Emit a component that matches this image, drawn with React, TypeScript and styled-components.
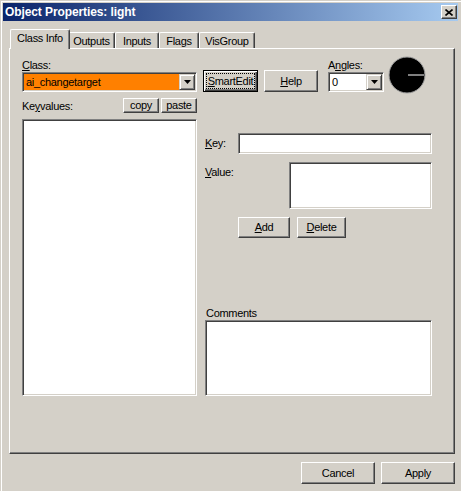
import styled, { createGlobalStyle } from "styled-components";

const GlobalStyle = createGlobalStyle`
    html, body {
        margin: 0;
        padding: 0;
        background: #d4d0c8;
    }
    body {
        font-family: "Liberation Sans", Tahoma, Arial, sans-serif;
        font-size: 11px;
        letter-spacing: -0.3px;
        color: #000;
    }
    * {
        box-sizing: border-box;
    }
`;

const Window = styled.div`
    width: 461px;
    height: 491px;
    background: #d4d0c8;
    border-top: 1px solid #d4d0c8;
    border-left: 1px solid #d4d0c8;
    box-shadow: inset 1px 1px 0 #fff;
    padding: 2px 3px 0 2px;
    display: flex;
    flex-direction: column;
    overflow: hidden;
`;

const TitleBar = styled.div`
    height: 18px;
    display: flex;
    align-items: center;
    justify-content: space-between;
    padding: 0 1px 0 2px;
    background: linear-gradient(to right, #0a246a, #a6caf0);
`;

const Title = styled.span`
    color: #fff;
    font-weight: bold;
    font-size: 12px;
    letter-spacing: -0.1px;
    line-height: 18px;
`;

const CloseBtn = styled.div`
    width: 16px;
    height: 14px;
    background: #d4d0c8;
    border: 1px solid;
    border-color: #fff #404040 #404040 #fff;
    box-shadow: inset -1px -1px 0 #808080;
    display: flex;
    align-items: center;
    justify-content: center;
`;

const Body = styled.div`
    flex: 1;
    display: flex;
    flex-direction: column;
    padding: 8px 3px 0 6px;
`;

const TabStrip = styled.div`
    height: 19px;
    display: flex;
    align-items: flex-end;
    padding-left: 3px;
`;

const Tab = styled.div<{ $w: number; $active?: boolean }>`
    width: ${(p) => p.$w + (p.$active ? 4 : 0)}px;
    height: ${(p) => (p.$active ? 20 : 16)}px;
    margin: ${(p) => (p.$active ? "0 -2px -1px" : "0")};
    position: relative;
    z-index: ${(p) => (p.$active ? 1 : 0)};
    background: #d4d0c8;
    border-top: 1px solid #fff;
    border-left: 1px solid #fff;
    border-right: 1px solid #404040;
    box-shadow: inset -1px 0 0 #808080;
    border-radius: 2px 2px 0 0;
    text-align: center;
    padding-top: 2px;
    line-height: 13px;
`;

const Panel = styled.div`
    height: 406px;
    background: #d4d0c8;
    border: 1px solid;
    border-color: #fff #404040 #404040 #fff;
    box-shadow: inset -1px -1px 0 #808080;
    padding: 9px 0 0 12px;
    display: flex;
    flex-direction: column;
`;

const TopRow = styled.div`
    display: flex;
    align-items: flex-end;
    height: 34px;
`;

const Group = styled.div<{ $ml?: number }>`
    display: flex;
    flex-direction: column;
    margin-left: ${(p) => p.$ml ?? 0}px;
`;

const Label = styled.span<{ $pl?: number }>`
    line-height: 14px;
    height: 14px;
    padding-left: ${(p) => p.$pl ?? 0}px;
    white-space: nowrap;
`;

const Field = styled.div<{ $w?: number; $h: number; $bg?: string; $grow?: boolean; $mt?: number }>`
    width: ${(p) => (p.$w ? `${p.$w}px` : "auto")};
    flex: ${(p) => (p.$grow ? "1" : "none")};
    height: ${(p) => p.$h}px;
    margin-top: ${(p) => p.$mt ?? 0}px;
    background: ${(p) => p.$bg ?? "#fff"};
    border: 1px solid;
    border-color: #808080 #fff #fff #808080;
    box-shadow: inset 1px 1px 0 #404040, inset -1px -1px 0 #d4d0c8;
`;

const Combo = styled(Field)`
    display: flex;
    align-items: center;
    padding: 1px;
`;

const ComboText = styled.span`
    flex: 1;
    padding-left: 2px;
    line-height: 16px;
`;

const DropBtn = styled.div`
    width: 16px;
    height: 16px;
    background: #d4d0c8;
    border: 1px solid;
    border-color: #d4d0c8 #404040 #404040 #d4d0c8;
    box-shadow: inset 1px 1px 0 #fff, inset -1px -1px 0 #808080;
    display: flex;
    align-items: center;
    justify-content: center;
`;

const Button = styled.button<{ $w: number; $h: number; $ml?: number; $focus?: boolean }>`
    width: ${(p) => p.$w}px;
    height: ${(p) => p.$h}px;
    margin-left: ${(p) => p.$ml ?? 0}px;
    padding: 0;
    font-family: inherit;
    font-size: 11px;
    letter-spacing: -0.3px;
    white-space: nowrap;
    color: #000;
    background: #d4d0c8;
    border: 1px solid;
    border-color: ${(p) => (p.$focus ? "#000" : "#fff #404040 #404040 #fff")};
    box-shadow: ${(p) =>
        p.$focus
            ? "inset 1px 1px 0 #fff, inset -1px -1px 0 #404040, inset -2px -2px 0 #808080"
            : "inset -1px -1px 0 #808080"};
    outline: ${(p) => (p.$focus ? "1px dotted #000" : "none")};
    outline-offset: -4px;
    line-height: 1;
    flex: none;
`;

const Dial = styled.svg`
    margin: -6px 0 -2px 4px;
    flex: none;
`;

const Columns = styled.div`
    display: flex;
    margin-top: 6px;
`;

const LeftCol = styled.div`
    width: 175px;
    display: flex;
    flex-direction: column;
`;

const ListHeader = styled.div`
    height: 15px;
    display: flex;
    align-items: flex-end;
    gap: 2px;
    span {
        margin-right: auto;
        line-height: 13px;
    }
`;

const RightCol = styled.div`
    width: 227px;
    margin-left: 8px;
    display: flex;
    flex-direction: column;
`;

const FieldRow = styled.div<{ $mt: number; $center?: boolean }>`
    display: flex;
    align-items: ${(p) => (p.$center ? "center" : "flex-start")};
    margin-top: ${(p) => p.$mt}px;
`;

const RowLabel = styled.span<{ $w: number; $pt?: number }>`
    width: ${(p) => p.$w}px;
    padding-top: ${(p) => p.$pt ?? 0}px;
    line-height: 13px;
    flex: none;
`;

const ButtonRow = styled.div`
    display: flex;
    margin-top: 8px;
    padding-left: 33px;
`;

const CommentsGroup = styled.div`
    margin-top: auto;
    display: flex;
    flex-direction: column;
`;

const Footer = styled.div`
    display: flex;
    justify-content: flex-end;
    gap: 6px;
    margin-top: 8px;
`;

const Arrow = () => (
    <svg width="7" height="4" viewBox="0 0 7 4">
        <path d="M0 0h7L3.5 4z" fill="#000" />
    </svg>
);

const tabs = [
    { name: "Class Info", w: 56 },
    { name: "Outputs", w: 47 },
    { name: "Inputs", w: 44 },
    { name: "Flags", w: 40 },
    { name: "VisGroup", w: 56 },
];

export default function App() {
    return (
        <>
            <GlobalStyle />
            <Window>
                <TitleBar>
                    <Title>Object Properties: light</Title>
                    <CloseBtn>
                        <svg width="8" height="7" viewBox="0 0 8 7">
                            <path
                                d="M0.5 0.5L7.5 6.5M7.5 0.5L0.5 6.5"
                                stroke="#000"
                                strokeWidth="1.6"
                            />
                        </svg>
                    </CloseBtn>
                </TitleBar>
                <Body>
                    <TabStrip>
                        {tabs.map((t, i) => (
                            <Tab key={t.name} $w={t.w} $active={i === 0}>
                                {t.name}
                            </Tab>
                        ))}
                    </TabStrip>
                    <Panel>
                        <TopRow>
                            <Group>
                                <Label>
                                    <u>C</u>lass:
                                </Label>
                                <Combo $w={175} $h={20} $bg="#ff8000">
                                    <ComboText>ai_changetarget</ComboText>
                                    <DropBtn>
                                        <Arrow />
                                    </DropBtn>
                                </Combo>
                            </Group>
                            <Button $w={55} $h={22} $ml={6} $focus>
                                <u>S</u>martEdit
                            </Button>
                            <Button $w={54} $h={22} $ml={6}>
                                <u>H</u>elp
                            </Button>
                            <Group $ml={10}>
                                <Label>
                                    A<u>n</u>gles:
                                </Label>
                                <Combo $w={56} $h={20}>
                                    <ComboText>0</ComboText>
                                    <DropBtn>
                                        <Arrow />
                                    </DropBtn>
                                </Combo>
                            </Group>
                            <Dial width="38" height="38" viewBox="0 0 38 38">
                                <circle cx="19" cy="19" r="18" fill="#000" stroke="#a0a0a0" strokeWidth="1" />
                                <line x1="20" y1="19" x2="36" y2="19" stroke="#fff" strokeWidth="1" />
                            </Dial>
                        </TopRow>
                        <Columns>
                            <LeftCol>
                                <ListHeader>
                                    <span>
                                        Ke<u>y</u>values:
                                    </span>
                                    <Button $w={36} $h={15}>copy</Button>
                                    <Button $w={36} $h={15}>paste</Button>
                                </ListHeader>
                                <Field $h={277} $mt={6} />
                            </LeftCol>
                            <RightCol>
                                <FieldRow $mt={35} $center>
                                    <RowLabel $w={33}>
                                        <u>K</u>ey:
                                    </RowLabel>
                                    <Field $h={21} $grow />
                                </FieldRow>
                                <FieldRow $mt={8}>
                                    <RowLabel $w={84} $pt={4}>
                                        <u>V</u>alue:
                                    </RowLabel>
                                    <Field $w={143} $h={47} />
                                </FieldRow>
                                <ButtonRow>
                                    <Button $w={52} $h={21}>
                                        <u>A</u>dd
                                    </Button>
                                    <Button $w={49} $h={21} $ml={7}>
                                        <u>D</u>elete
                                    </Button>
                                </ButtonRow>
                                <CommentsGroup>
                                    <Label $pl={1}>Comments</Label>
                                    <Field $h={76} />
                                </CommentsGroup>
                            </RightCol>
                        </Columns>
                    </Panel>
                    <Footer>
                        <Button $w={74} $h={22}>Cancel</Button>
                        <Button $w={74} $h={22}>Apply</Button>
                    </Footer>
                </Body>
            </Window>
        </>
    );
}
